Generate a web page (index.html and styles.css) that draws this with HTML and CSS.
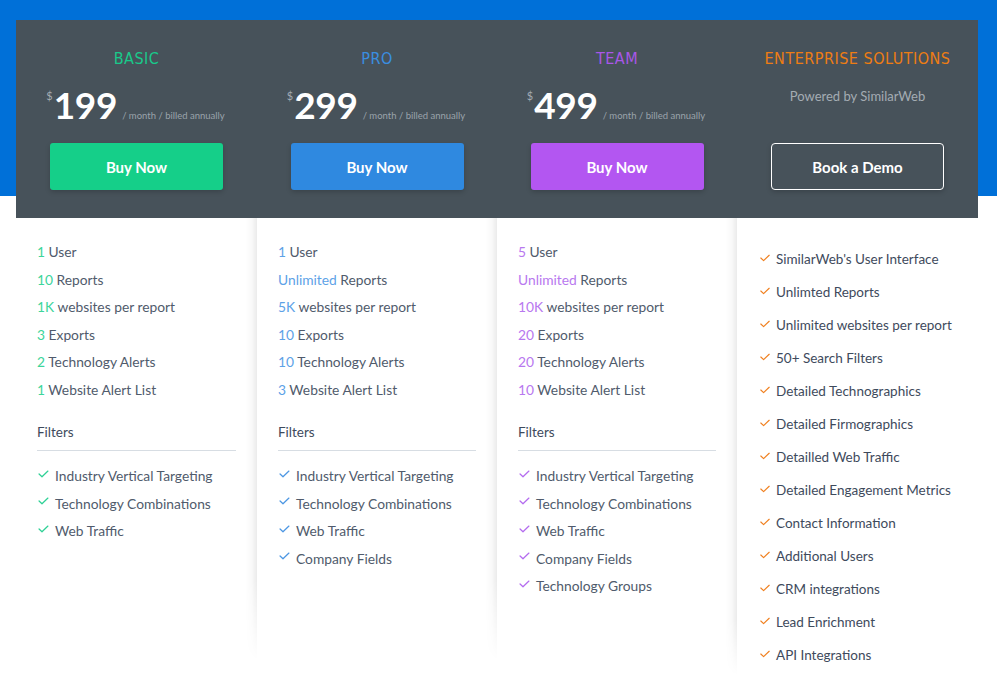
FILE: index.html
```html
<!DOCTYPE html>
<html>
<head>
<meta charset="utf-8">
<link rel="stylesheet" href="styles.css">
</head>
<body>
<div class="page">
  <div class="plans">
    <section class="card basic">
      <header class="head">
        <h2 class="title">BASIC</h2>
        <div class="price"><span class="cur">$</span><span class="amt">199</span><span class="per">/ month / billed annually</span></div>
        <a class="btn">Buy Now</a>
      </header>
      <div class="body">
        <ul class="feats">
          <li><b>1</b> User</li>
          <li><b>10</b> Reports</li>
          <li><b>1K</b> websites per report</li>
          <li><b>3</b> Exports</li>
          <li><b>2</b> Technology Alerts</li>
          <li><b>1</b> Website Alert List</li>
        </ul>
        <div class="filters">Filters</div>
        <ul class="checks">
          <li><svg class="ck" viewBox="0 0 12 9"><path d="M1 4.5 L4.3 7.6 L11 1.2"/></svg>Industry Vertical Targeting</li>
          <li><svg class="ck" viewBox="0 0 12 9"><path d="M1 4.5 L4.3 7.6 L11 1.2"/></svg>Technology Combinations</li>
          <li><svg class="ck" viewBox="0 0 12 9"><path d="M1 4.5 L4.3 7.6 L11 1.2"/></svg>Web Traffic</li>
        </ul>
      </div>
    </section>
    <section class="card pro">
      <header class="head">
        <h2 class="title">PRO</h2>
        <div class="price"><span class="cur">$</span><span class="amt">299</span><span class="per">/ month / billed annually</span></div>
        <a class="btn">Buy Now</a>
      </header>
      <div class="body">
        <ul class="feats">
          <li><b>1</b> User</li>
          <li><b>Unlimited</b> Reports</li>
          <li><b>5K</b> websites per report</li>
          <li><b>10</b> Exports</li>
          <li><b>10</b> Technology Alerts</li>
          <li><b>3</b> Website Alert List</li>
        </ul>
        <div class="filters">Filters</div>
        <ul class="checks">
          <li><svg class="ck" viewBox="0 0 12 9"><path d="M1 4.5 L4.3 7.6 L11 1.2"/></svg>Industry Vertical Targeting</li>
          <li><svg class="ck" viewBox="0 0 12 9"><path d="M1 4.5 L4.3 7.6 L11 1.2"/></svg>Technology Combinations</li>
          <li><svg class="ck" viewBox="0 0 12 9"><path d="M1 4.5 L4.3 7.6 L11 1.2"/></svg>Web Traffic</li>
          <li><svg class="ck" viewBox="0 0 12 9"><path d="M1 4.5 L4.3 7.6 L11 1.2"/></svg>Company Fields</li>
        </ul>
      </div>
    </section>
    <section class="card team">
      <header class="head">
        <h2 class="title">TEAM</h2>
        <div class="price"><span class="cur">$</span><span class="amt">499</span><span class="per">/ month / billed annually</span></div>
        <a class="btn">Buy Now</a>
      </header>
      <div class="body">
        <ul class="feats">
          <li><b>5</b> User</li>
          <li><b>Unlimited</b> Reports</li>
          <li><b>10K</b> websites per report</li>
          <li><b>20</b> Exports</li>
          <li><b>20</b> Technology Alerts</li>
          <li><b>10</b> Website Alert List</li>
        </ul>
        <div class="filters">Filters</div>
        <ul class="checks">
          <li><svg class="ck" viewBox="0 0 12 9"><path d="M1 4.5 L4.3 7.6 L11 1.2"/></svg>Industry Vertical Targeting</li>
          <li><svg class="ck" viewBox="0 0 12 9"><path d="M1 4.5 L4.3 7.6 L11 1.2"/></svg>Technology Combinations</li>
          <li><svg class="ck" viewBox="0 0 12 9"><path d="M1 4.5 L4.3 7.6 L11 1.2"/></svg>Web Traffic</li>
          <li><svg class="ck" viewBox="0 0 12 9"><path d="M1 4.5 L4.3 7.6 L11 1.2"/></svg>Company Fields</li>
          <li><svg class="ck" viewBox="0 0 12 9"><path d="M1 4.5 L4.3 7.6 L11 1.2"/></svg>Technology Groups</li>
        </ul>
      </div>
    </section>
    <section class="card ent">
      <header class="head">
        <h2 class="title">ENTERPRISE SOLUTIONS</h2>
        <div class="powered">Powered by SimilarWeb</div>
        <a class="btn outline">Book a Demo</a>
      </header>
      <div class="body">
        <ul class="checks ent-list">
          <li><svg class="ck" viewBox="0 0 12 9"><path d="M1 4.5 L4.3 7.6 L11 1.2"/></svg>SimilarWeb's User Interface</li>
          <li><svg class="ck" viewBox="0 0 12 9"><path d="M1 4.5 L4.3 7.6 L11 1.2"/></svg>Unlimted Reports</li>
          <li><svg class="ck" viewBox="0 0 12 9"><path d="M1 4.5 L4.3 7.6 L11 1.2"/></svg>Unlimited websites per report</li>
          <li><svg class="ck" viewBox="0 0 12 9"><path d="M1 4.5 L4.3 7.6 L11 1.2"/></svg>50+ Search Filters</li>
          <li><svg class="ck" viewBox="0 0 12 9"><path d="M1 4.5 L4.3 7.6 L11 1.2"/></svg>Detailed Technographics</li>
          <li><svg class="ck" viewBox="0 0 12 9"><path d="M1 4.5 L4.3 7.6 L11 1.2"/></svg>Detailed Firmographics</li>
          <li><svg class="ck" viewBox="0 0 12 9"><path d="M1 4.5 L4.3 7.6 L11 1.2"/></svg>Detailled Web Traffic</li>
          <li><svg class="ck" viewBox="0 0 12 9"><path d="M1 4.5 L4.3 7.6 L11 1.2"/></svg>Detailed Engagement Metrics</li>
          <li><svg class="ck" viewBox="0 0 12 9"><path d="M1 4.5 L4.3 7.6 L11 1.2"/></svg>Contact Information</li>
          <li><svg class="ck" viewBox="0 0 12 9"><path d="M1 4.5 L4.3 7.6 L11 1.2"/></svg>Additional Users</li>
          <li><svg class="ck" viewBox="0 0 12 9"><path d="M1 4.5 L4.3 7.6 L11 1.2"/></svg>CRM integrations</li>
          <li><svg class="ck" viewBox="0 0 12 9"><path d="M1 4.5 L4.3 7.6 L11 1.2"/></svg>Lead Enrichment</li>
          <li><svg class="ck" viewBox="0 0 12 9"><path d="M1 4.5 L4.3 7.6 L11 1.2"/></svg>API Integrations</li>
        </ul>
      </div>
    </section>
  </div>
</div>
</body>
</html>
```
FILE: styles.css
```css
* { box-sizing: border-box; }
html, body { margin: 0; padding: 0; background: #fff; }
body {
  font-family: Lato, "Open Sans", sans-serif;
  color: #505b6c;
  width: 997px;
  height: 688px;
  overflow: hidden;
}
.page {
  background: linear-gradient(#0070d8 0, #0070d8 196px, #fff 196px);
  height: 688px;
  padding: 20px 19px 0 16px;
}
.plans {
  display: flex;
  align-items: flex-start;
}
.card {
  width: 240px;
  position: relative;
  background: #fff;
  height: 668px;
}
.card.basic, .card.ent { width: 241px; }
.card.pro::before, .card.team::before, .card.ent::before {
  content: "";
  position: absolute;
  left: -12px;
  top: 0;
  width: 12px;
  height: 650px;
  background: linear-gradient(to left, rgba(0, 0, 0, 0.08), rgba(0, 0, 0, 0.025) 45%, rgba(0, 0, 0, 0));
  -webkit-mask-image: linear-gradient(to bottom, #000 0, #000 560px, transparent 640px);
  mask-image: linear-gradient(to bottom, #000 0, #000 560px, transparent 640px);
  pointer-events: none;
}
.card.ent::before { height: 668px; -webkit-mask-image: linear-gradient(to bottom, #000 0, #000 600px, transparent 655px); mask-image: linear-gradient(to bottom, #000 0, #000 600px, transparent 655px); }
.head {
  background: #47525a;
  height: 198px;
  display: flex;
  flex-direction: column;
  align-items: center;
  padding-top: 29px;
  position: relative;
  z-index: 1;
}
.title {
  margin: 0;
  font-family: "DejaVu Sans", sans-serif;
  font-stretch: condensed;
  font-weight: normal;
  font-size: 16px;
  line-height: 19px;
  letter-spacing: 0.5px;
}
.basic .title { color: #19c98a; }
.pro .title { color: #3a8ee0; }
.team .title { color: #a957e8; }
.ent .title { color: #ee7d13; }

.price {
  display: flex;
  align-items: baseline;
  margin-top: 16px;
  height: 40px;
  padding-right: 2px;
}
.cur {
  align-self: flex-start;
  color: #a4acb3;
  font-size: 11px;
  margin-top: 5px;
  margin-right: 1px;
}
.amt {
  color: #fff;
  font-size: 37px;
  font-weight: 700;
  line-height: 42px;
  letter-spacing: -0.3px;
}
.per {
  color: #9aa3ab;
  font-size: 9.5px;
  margin-left: 5px;
}
.btn {
  display: flex;
  align-items: center;
  justify-content: center;
  width: 173px;
  height: 47px;
  margin-top: 19px;
  border-radius: 3px;
  color: #fff;
  font-size: 15px;
  font-weight: 700;
  box-shadow: 0 2px 5px rgba(0, 0, 0, 0.18);
}
.basic .btn { background: #15cf89; }
.pro .btn { background: #2f89e0; }
.team .btn { background: #b356f1; }
.btn.outline {
  border: 1px solid #fff;
  background: transparent;
  border-radius: 4px;
  margin-top: 18px;
}
.powered {
  color: #a4acb3;
  font-size: 13px;
  margin-top: 19px;
  line-height: 18px;
  height: 38px;
}

.body {
  padding: 20px 21px 0 21px;
}
ul { list-style: none; margin: 0; padding: 0; }
.feats li, .checks li {
  font-size: 13.8px;
  line-height: 27.5px;
  height: 27.5px;
  white-space: nowrap;
}
.feats b { font-weight: normal; }
.basic b { color: #3dd59b; }
.pro b { color: #5da2e7; }
.team b { color: #b878ef; }

.filters {
  margin-top: 16px;
  color: #3e4a5c;
  font-size: 13.5px;
  line-height: 27px;
  padding-bottom: 4px;
  border-bottom: 1px solid #d7dde3;
  margin-bottom: 11px;
}
.checks li {
  display: flex;
  align-items: center;
}
.ck {
  width: 11px;
  height: 8px;
  margin: 0 6px 0 1px;
  fill: none;
  stroke-width: 1.4;
  stroke-linecap: round;
  stroke-linejoin: round;
  position: relative;
  top: -2px;
}
.basic .ck { stroke: #2fd196; }
.pro .ck { stroke: #4d97e3; }
.team .ck { stroke: #b46cef; }
.ent .ck { stroke: #f08020; width: 10px; margin: 0 6px 0 2px; }

.ent .body { padding: 25px 21px 0 21px; }
.ent-list li {
  height: 33px;
  line-height: 33px;
  font-size: 13.5px;
  color: #3e4a5c;
}
```
